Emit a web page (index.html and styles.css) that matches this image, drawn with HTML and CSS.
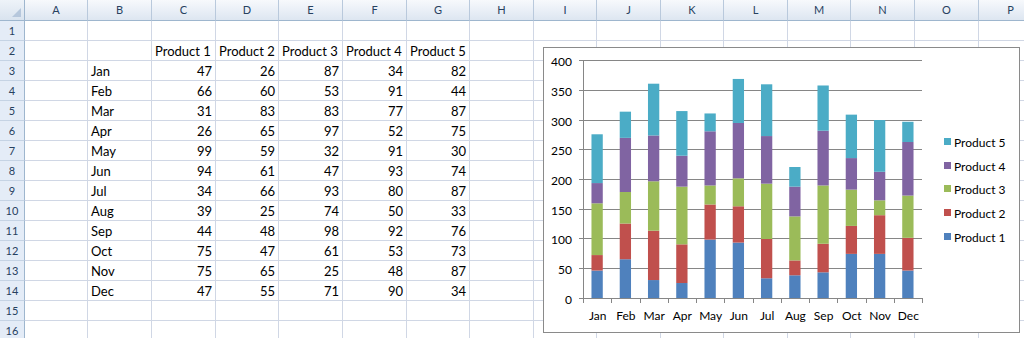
FILE: index.html
```html
<!DOCTYPE html>
<html lang="en">
<head>
  <meta charset="UTF-8">
  <title>Monthly Sales by Product</title>
  <link rel="stylesheet" href="styles.css">
</head>
<body>
  <div class="book">
    <table class="sheet">
      <thead>
        <tr>
          <th class="corner"></th>
          <th class="n">A</th><th>B</th><th>C</th><th class="n">D</th><th>E</th><th>F</th><th class="n">G</th><th>H</th>
          <th class="n">I</th><th>J</th><th class="n">K</th><th>L</th><th class="n">M</th><th>N</th><th>O</th><th>P</th>
        </tr>
      </thead>
      <tbody>
        <tr><th>1</th><td></td><td></td><td></td><td></td><td></td><td></td><td></td><td></td><td></td><td></td><td></td><td></td><td></td><td></td><td></td><td></td></tr>
        <tr><th>2</th><td></td><td></td><td>Product 1</td><td>Product 2</td><td>Product 3</td><td>Product 4</td><td>Product 5</td><td></td><td></td><td></td><td></td><td></td><td></td><td></td><td></td><td></td></tr>
        <tr><th>3</th><td></td><td>Jan</td><td class="num">47</td><td class="num">26</td><td class="num">87</td><td class="num">34</td><td class="num">82</td><td></td><td></td><td></td><td></td><td></td><td></td><td></td><td></td><td></td></tr>
        <tr><th>4</th><td></td><td>Feb</td><td class="num">66</td><td class="num">60</td><td class="num">53</td><td class="num">91</td><td class="num">44</td><td></td><td></td><td></td><td></td><td></td><td></td><td></td><td></td><td></td></tr>
        <tr><th>5</th><td></td><td>Mar</td><td class="num">31</td><td class="num">83</td><td class="num">83</td><td class="num">77</td><td class="num">87</td><td></td><td></td><td></td><td></td><td></td><td></td><td></td><td></td><td></td></tr>
        <tr><th>6</th><td></td><td>Apr</td><td class="num">26</td><td class="num">65</td><td class="num">97</td><td class="num">52</td><td class="num">75</td><td></td><td></td><td></td><td></td><td></td><td></td><td></td><td></td><td></td></tr>
        <tr><th>7</th><td></td><td>May</td><td class="num">99</td><td class="num">59</td><td class="num">32</td><td class="num">91</td><td class="num">30</td><td></td><td></td><td></td><td></td><td></td><td></td><td></td><td></td><td></td></tr>
        <tr><th>8</th><td></td><td>Jun</td><td class="num">94</td><td class="num">61</td><td class="num">47</td><td class="num">93</td><td class="num">74</td><td></td><td></td><td></td><td></td><td></td><td></td><td></td><td></td><td></td></tr>
        <tr><th>9</th><td></td><td>Jul</td><td class="num">34</td><td class="num">66</td><td class="num">93</td><td class="num">80</td><td class="num">87</td><td></td><td></td><td></td><td></td><td></td><td></td><td></td><td></td><td></td></tr>
        <tr><th>10</th><td></td><td>Aug</td><td class="num">39</td><td class="num">25</td><td class="num">74</td><td class="num">50</td><td class="num">33</td><td></td><td></td><td></td><td></td><td></td><td></td><td></td><td></td><td></td></tr>
        <tr><th>11</th><td></td><td>Sep</td><td class="num">44</td><td class="num">48</td><td class="num">98</td><td class="num">92</td><td class="num">76</td><td></td><td></td><td></td><td></td><td></td><td></td><td></td><td></td><td></td></tr>
        <tr><th>12</th><td></td><td>Oct</td><td class="num">75</td><td class="num">47</td><td class="num">61</td><td class="num">53</td><td class="num">73</td><td></td><td></td><td></td><td></td><td></td><td></td><td></td><td></td><td></td></tr>
        <tr><th>13</th><td></td><td>Nov</td><td class="num">75</td><td class="num">65</td><td class="num">25</td><td class="num">48</td><td class="num">87</td><td></td><td></td><td></td><td></td><td></td><td></td><td></td><td></td><td></td></tr>
        <tr><th>14</th><td></td><td>Dec</td><td class="num">47</td><td class="num">55</td><td class="num">71</td><td class="num">90</td><td class="num">34</td><td></td><td></td><td></td><td></td><td></td><td></td><td></td><td></td><td></td></tr>
        <tr><th>15</th><td></td><td></td><td></td><td></td><td></td><td></td><td></td><td></td><td></td><td></td><td></td><td></td><td></td><td></td><td></td><td></td></tr>
        <tr><th>16</th><td></td><td></td><td></td><td></td><td></td><td></td><td></td><td></td><td></td><td></td><td></td><td></td><td></td><td></td><td></td><td></td></tr>
      </tbody>
    </table>

    <!-- embedded chart floats over the cells -->
    <div class="chart">
      <svg id="chart" width="475" height="284" viewBox="0 0 475 284">
        <g class="grid">
          <line x1="39" y1="12.5" x2="378" y2="12.5"/>
          <line x1="39" y1="42.5" x2="378" y2="42.5"/>
          <line x1="39" y1="72.5" x2="378" y2="72.5"/>
          <line x1="39" y1="101.5" x2="378" y2="101.5"/>
          <line x1="39" y1="131.5" x2="378" y2="131.5"/>
          <line x1="39" y1="161.5" x2="378" y2="161.5"/>
          <line x1="39" y1="190.5" x2="378" y2="190.5"/>
          <line x1="39" y1="220.5" x2="378" y2="220.5"/>
        </g>
        <g id="bars"></g>
        <g class="axis" id="axis">
          <line x1="39.5" y1="12" x2="39.5" y2="251"/>
          <line x1="39" y1="250.5" x2="378" y2="250.5"/>
          <line x1="35" y1="12.5" x2="39" y2="12.5"/>
          <line x1="35" y1="42.5" x2="39" y2="42.5"/>
          <line x1="35" y1="72.5" x2="39" y2="72.5"/>
          <line x1="35" y1="101.5" x2="39" y2="101.5"/>
          <line x1="35" y1="131.5" x2="39" y2="131.5"/>
          <line x1="35" y1="161.5" x2="39" y2="161.5"/>
          <line x1="35" y1="190.5" x2="39" y2="190.5"/>
          <line x1="35" y1="220.5" x2="39" y2="220.5"/>
          <line x1="35" y1="250.5" x2="39" y2="250.5"/>
        </g>
        <g class="ylabels">
          <text x="28" y="18">400</text>
          <text x="28" y="48">350</text>
          <text x="28" y="78">300</text>
          <text x="28" y="107">250</text>
          <text x="28" y="137">200</text>
          <text x="28" y="167">150</text>
          <text x="28" y="196">100</text>
          <text x="28" y="226">50</text>
          <text x="28" y="256">0</text>
        </g>
        <g id="xlabels" class="xlabels"></g>
        <g class="legend">
          <rect x="400" y="90" width="7" height="7" fill="#4bacc6"/><text x="410" y="98.5">Product 5</text>
          <rect x="400" y="114" width="7" height="7" fill="#8064a2"/><text x="410" y="122.5">Product 4</text>
          <rect x="400" y="137" width="7" height="7" fill="#9bbb59"/><text x="410" y="145.5">Product 3</text>
          <rect x="400" y="161" width="7" height="7" fill="#c0504d"/><text x="410" y="169.5">Product 2</text>
          <rect x="400" y="185" width="7" height="7" fill="#4f81bd"/><text x="410" y="193.5">Product 1</text>
        </g>
      </svg>
    </div>
  </div>

  <script>
    const months = ['Jan','Feb','Mar','Apr','May','Jun','Jul','Aug','Sep','Oct','Nov','Dec'];
    const colors = ['#4f81bd', '#c0504d', '#9bbb59', '#8064a2', '#4bacc6'];
    const ns = 'http://www.w3.org/2000/svg';

    // read the numbers straight out of the sheet (rows 3-14, columns C-G)
    const rows = Array.from(document.querySelectorAll('.sheet tbody tr')).slice(2, 14);
    const data = rows.map(tr => Array.from(tr.querySelectorAll('td.num')).map(td => Number(td.textContent)));

    const bars = document.getElementById('bars');
    const axis = document.getElementById('axis');
    const xlabels = document.getElementById('xlabels');

    const x0 = 39, y0 = 250.5, step = 339 / 12, barW = 11.3, scale = 238 / 400;

    function el(name, attrs) {
      const node = document.createElementNS(ns, name);
      for (const k in attrs) node.setAttribute(k, attrs[k]);
      return node;
    }

    data.forEach((row, i) => {
      const left = x0 + i * step + (step - barW) / 2;
      let y = y0;
      row.forEach((v, j) => {
        const h = v * scale;
        y -= h;
        bars.appendChild(el('rect', { x: left, y: y, width: barW, height: h, fill: colors[j] }));
      });
      const label = el('text', { x: left + barW / 2 + 0.5, y: 272 });
      label.textContent = months[i];
      xlabels.appendChild(label);
    });

    for (let i = 0; i <= 12; i++) {
      const x = Math.round(x0 + i * step) + 0.5;
      axis.appendChild(el('line', { x1: x, y1: 250, x2: x, y2: 255 }));
    }
  </script>
</body>
</html>
```

FILE: styles.css
```css
body {
  margin: 0;
  background: #fff;
  overflow: hidden;
  font-family: Lato, "Liberation Sans", sans-serif;
}

.book {
  position: relative;
  width: 1043px;
}

.sheet {
  table-layout: fixed;
  width: 1043px;
  border-collapse: separate;
  border-spacing: 0;
  font-size: 13px;
  color: #000;
}

.sheet th,
.sheet td {
  padding: 0;
  border-right: 1px solid #d0d7e5;
  border-bottom: 1px solid #d0d7e5;
  white-space: nowrap;
  overflow: hidden;
}

.sheet thead tr {
  height: 21px;
}

.sheet tbody tr {
  height: 20px;
}

/* column letters */
.sheet thead th {
  width: 63px;
  font-size: 11px;
  font-weight: normal;
  color: #27415f;
  text-align: center;
  line-height: 20px;
  background: linear-gradient(#f7f9fc, #dde6f1);
  border-right: 1px solid #b9c9dc;
  border-bottom: 1px solid #9eb6ce;
}

.sheet thead th.n {
  width: 62px;
}

.sheet thead th.corner {
  width: 24px;
  position: relative;
  background: linear-gradient(#eef3f9, #d9e3ef);
  border-right: 1px solid #9eb6ce;
}

.sheet thead th.corner::after {
  content: "";
  position: absolute;
  right: 3px;
  bottom: 3px;
  border-style: solid;
  border-width: 0 0 9px 9px;
  border-color: transparent transparent #b6c7dc transparent;
}

/* row numbers */
.sheet tbody th {
  font-size: 11px;
  font-weight: normal;
  color: #27415f;
  text-align: center;
  line-height: 19px;
  background: #e4ecf7;
  border-right: 1px solid #9eb6ce;
  border-bottom: 1px solid #c5d3e4;
}

.sheet td {
  padding: 0 3px;
  line-height: 17px;
  vertical-align: bottom;
}

.sheet td.num {
  text-align: right;
}

.chart {
  position: absolute;
  left: 543px;
  top: 47px;
  width: 475px;
  height: 284px;
  background: #fff;
  border: 1px solid #8a8a8a;
}

.chart svg {
  display: block;
}

.chart .grid line,
.chart .axis line {
  stroke: #868686;
  stroke-width: 1;
}

.chart text {
  font-family: Lato, "Liberation Sans", sans-serif;
  font-size: 12px;
  fill: #000;
}

.chart .ylabels text {
  text-anchor: end;
}

.chart .xlabels text {
  text-anchor: middle;
}
```
